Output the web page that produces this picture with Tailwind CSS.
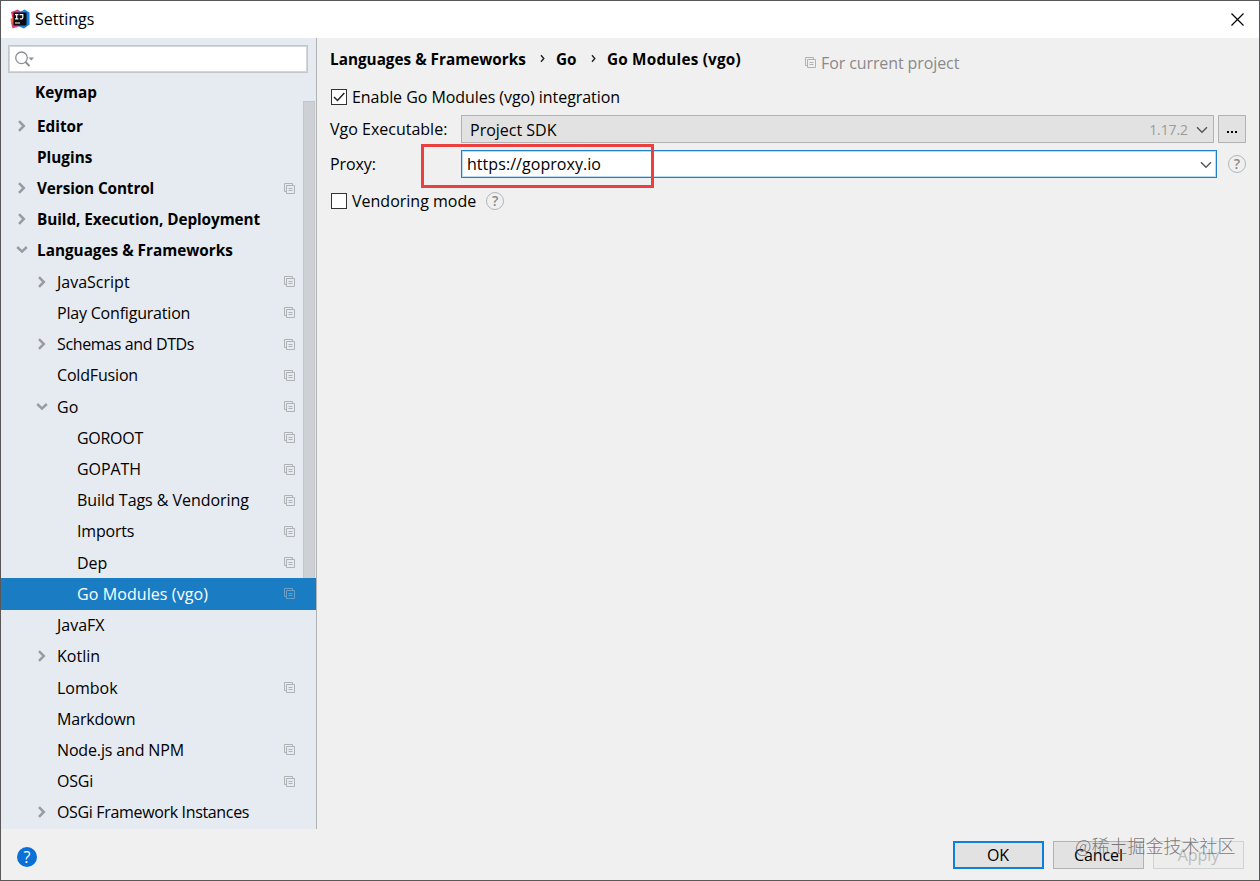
<!DOCTYPE html>
<html lang="en">
<head>
<meta charset="utf-8">
<title>Settings</title>
<script src="https://cdn.jsdelivr.net/npm/@tailwindcss/browser@4"></script>
</head>
<body class="w-[1260px] h-[881px] overflow-hidden">
<svg class="hidden">
  <symbol id="right" viewBox="0 0 10 12"><path d="M2 1.2 6.8 6 2 10.8" fill="none" stroke="#999c9f" stroke-width="2.5"/></symbol>
  <symbol id="down" viewBox="0 0 12 10"><path d="M1.2 2 6 6.6 10.8 2" fill="none" stroke="#999c9f" stroke-width="2.5"/></symbol>
  <symbol id="copy" viewBox="0 0 11 11"><path d="M2.5 8.5h-2v-8h8v2M2.5 2.5h8v8h-8zM4.5 5.5h4M4.5 7.5h4" fill="none" stroke="currentColor"/></symbol>
  <symbol id="chev" viewBox="0 0 12 8"><path d="M1 1.2 6 6.3 11 1.2" fill="none" stroke="#555" stroke-width="1.4"/></symbol>
</svg>
<div class="relative w-full h-full flex flex-col border border-[#58585a] bg-[#f0f0f0] text-black text-[16px] leading-5 whitespace-nowrap font-['Open_Sans','Noto_Sans_CJK_SC',sans-serif]">
  <header class="h-[37px] shrink-0 bg-white flex items-center pl-[9px] pr-[15px] pb-px">
    <svg class="w-5 h-5" viewBox="0 0 20 20">
      <path d="M1 3 8 .5 10 9 4 12 2 8z" fill="#e8396d"/>
      <path d="M.5 10 5 7 9 16 2 18z" fill="#f0683c"/>
      <path d="M1.5 14 6 12l4 5-7.500 2.500z" fill="#d9447d"/>
      <path d="M10 3 14.500.5 19.500 3.500v12L14 19.500 8 17z" fill="#1b7fe0"/>
      <path d="M8 1 12 3 10 5H6z" fill="#8a58b8"/>
      <path d="M3.500 3.500h13v13h-13z" fill="#0b0b10"/>
      <path d="M5 5.600h3.400M6.700 5.600v4.300M5 9.900h3.400M9.600 5.600h3.200v3q0 1.300-1.300 1.300h-1.700M5 14h5" fill="none" stroke="#fff" stroke-width="1.200"/>
    </svg>
    <span class="ml-[5px]">Settings</span>
    <svg class="ml-auto w-[13px] h-[13px]" viewBox="0 0 13 13"><path d="M.5.5l12 12M12.500.5l-12 12" stroke="#000" stroke-width="1.200"/></svg>
  </header>
  <div class="flex h-[791px] shrink-0">
    <aside class="relative w-[316px] h-full bg-[#e6eaf1] border-r border-[#b0b1b3] flex flex-col shrink-0">
      <div class="mt-[7px] ml-[7px] w-[300px] h-7 shrink-0 bg-white border border-[#c3c7cb] ring-1 ring-inset ring-[#d3d6d9] flex items-center pl-[5px]">
        <svg class="w-[22px] h-4" viewBox="0 0 22 16"><circle cx="7.500" cy="6.800" r="5.800" fill="none" stroke="#8c8f92" stroke-width="1.300"/><path d="m11.500 11 4 4" stroke="#8c8f92" stroke-width="1.800"/><path d="M14.500 6.500h5.500l-2.700 3z" fill="#8c8f92"/></svg>
      </div>
      <div class="absolute right-px top-[63px] w-[12px] h-[506px] bg-[#cdd1d5] border border-[#c3c7cb]"></div>
      <nav id="tree" class="relative flex flex-col"></nav>
    </aside>
    <main class="flex-1 pl-[13px] flex flex-col">
      <div class="flex h-10 items-center pt-px font-bold text-[15.300px]">
        <span class="w-[196px]">Languages &amp; Frameworks</span>
        <svg class="ml-[14px] w-[5px] h-[9px]" viewBox="0 0 5 9"><path d="M1 1.200 3.800 4.500 1 7.800" fill="none" stroke="#222" stroke-width="1.400"/></svg>
        <span class="ml-[11px] w-[22px]">Go</span>
        <svg class="ml-[13px] w-[5px] h-[9px]" viewBox="0 0 5 9"><path d="M1 1.200 3.800 4.500 1 7.800" fill="none" stroke="#222" stroke-width="1.400"/></svg>
        <span class="ml-[11px] w-[135px] tracking-[0.2px]">Go Modules (vgo)</span>
        <span class="ml-[63px] mt-2 flex items-center font-normal text-[16px] text-[#8a8a8a] tracking-[-0.1px]"><svg class="w-[11px] h-[11px] mr-[5px] text-[#b0b3b5]"><use href="#copy"/></svg>For current project</span>
      </div>
      <div class="mt-[9px] flex h-5 items-center">
        <span class="ml-px w-4 h-4 bg-white border border-[#333]"><svg viewBox="0 0 14 14" class="w-[14px] h-[14px]"><path d="m2 7 3.500 3.500L12.300 3" fill="none" stroke="#222" stroke-width="1.500"/></svg></span>
        <span class="ml-[5px] tracking-[-0.06px]">Enable Go Modules (vgo) integration</span>
      </div>
      <div class="mt-2 flex h-7 items-center">
        <span class="w-[131px] pb-px">Vgo Executable:</span>
        <div class="w-[753px] h-[28px] border border-[#b2b2b2] bg-[#e2e2e2] flex items-center pl-2 pr-[5px] pt-[2px]">Project SDK
          <span class="ml-auto mr-[8px] text-[14px] text-[#9b9b9b] tracking-[-0.1px]">1.17.2</span><svg class="w-3 h-2"><use href="#chev"/></svg>
        </div>
        <div class="ml-[4px] w-7 h-[28px] border border-[#b2b2b2] bg-[#e2e2e2] flex items-center justify-center gap-[2px] pt-[6px]">
          <span class="w-[2px] h-[2px] bg-black"></span><span class="w-[2px] h-[2px] bg-black"></span><span class="w-[2px] h-[2px] bg-black"></span>
        </div>
      </div>
      <div class="mt-[7px] flex h-7 items-center">
        <span class="w-[131px] pb-px tracking-[-0.1px]">Proxy:</span>
        <div class="w-[756px] h-[28px] border border-[#2380c6] ring-1 ring-inset ring-[#b9dcf3] bg-white flex items-center pl-[5px] pr-1"><span class="pb-px tracking-[0.05px]">https://goproxy.io</span><svg class="ml-auto mt-px w-3 h-2"><use href="#chev"/></svg></div>
        <span class="ml-[11px] w-[18px] h-[18px] rounded-full border-[1.500px] border-[#b3b6b8] text-[#888] text-[14px] font-semibold flex items-center justify-center leading-none">?</span>
      </div>
      <div class="mt-[13px] flex h-5 items-center">
        <span class="ml-px w-4 h-4 bg-white border border-[#333]"></span>
        <span class="ml-[5px]">Vendoring mode</span>
        <span class="ml-[10px] w-[18px] h-[18px] rounded-full border-[1.500px] border-[#b3b6b8] text-[#888] text-[14px] font-semibold flex items-center justify-center leading-none">?</span>
      </div>
    </main>
  </div>
  <footer class="flex-1 flex items-center pl-4 pr-[15px]">
    <span class="mt-[5px] w-5 h-5 rounded-full bg-[#0a6fd6] text-white text-[16px] flex items-center justify-center leading-none">?</span>
    <div class="mt-px ml-auto w-[91px] h-7 border-2 border-[#0f7fdc] bg-[#e2e2e2] flex items-center justify-center pr-px">OK</div>
    <div class="mt-px ml-[9px] w-[91px] h-7 border border-[#b2b2b2] bg-[#e2e2e2] flex items-center justify-center tracking-[-0.1px]">Cancel</div>
    <div class="mt-px ml-[9px] w-[91px] h-7 border border-[#d2d2d2] bg-[#ededed] text-[#bcbcbc] flex items-center justify-center">Apply</div>
  </footer>
  <div class="absolute left-[420px] top-[143px] w-[233px] h-[44px] border-3 border-[#ea4040]"></div>
  <div class="absolute left-[1074px] top-[832px] text-[18px] leading-6 text-[#666]/85 font-['Noto_Sans_CJK_SC'] font-light">@稀土掘金技术社区</div>
</div>
<script>
// label, left padding of the text, arrow, project icon, label classes
const rows = [
  ['Keymap', 34, '', 0, 'font-bold text-[15.300px]'],
  ['Editor', 36, 'right', 0, 'font-bold text-[15.300px]'],
  ['Plugins', 36, '', 0, 'font-bold text-[15.300px]'],
  ['Version Control', 36, 'right', 1, 'font-bold text-[15.300px] tracking-[-0.1px]'],
  ['Build, Execution, Deployment', 36, 'right', 0, 'font-bold text-[15.300px] tracking-[-0.06px]'],
  ['Languages & Frameworks', 36, 'down', 0, 'font-bold text-[15.300px]'],
  ['JavaScript', 56, 'right', 1, ''],
  ['Play Configuration', 56, '', 1, 'tracking-[-0.2px]'],
  ['Schemas and DTDs', 56, 'right', 1, 'tracking-[-0.37px]'],
  ['ColdFusion', 56, '', 1, 'tracking-[-0.17px]'],
  ['Go', 56, 'down', 1, ''],
  ['GOROOT', 76, '', 1, 'tracking-[-0.28px]'],
  ['GOPATH', 76, '', 1, 'tracking-[-0.1px]'],
  ['Build Tags & Vendoring', 76, '', 1, 'tracking-[-0.05px]'],
  ['Imports', 76, '', 1, 'tracking-[-0.2px]'],
  ['Dep', 76, '', 1, ''],
  ['Go Modules (vgo)', 76, '', 1, 'tracking-[0.09px]'],
  ['JavaFX', 56, '', 0, ''],
  ['Kotlin', 56, 'right', 0, ''],
  ['Lombok', 56, '', 1, ''],
  ['Markdown', 56, '', 0, 'tracking-[-0.2px]'],
  ['Node.js and NPM', 56, '', 1, 'tracking-[-0.15px]'],
  ['OSGi', 56, '', 1, 'tracking-[-0.2px]'],
  ['OSGi Framework Instances', 56, 'right', 0, 'tracking-[-0.34px]'],
];
document.getElementById('tree').innerHTML = rows.map(([label, x, arrow, icon, cls], i) => {
  const on = i === 16;
  const a = arrow === 'right' ? '<svg class="w-[10px] h-3 mr-[10px]"><use href="#right"/></svg>'
          : arrow === 'down' ? '<svg class="w-3 h-[10px] mr-[9px]"><use href="#down"/></svg>' : '';
  const pad = x - (arrow === 'right' ? 20 : arrow === 'down' ? 21 : 0);
  return `<div class="flex items-center pr-[21px] ${i ? 'h-[31.23px]' : 'h-[37px] pt-px'} ${on ? 'bg-[#1a7dc4] text-white' : ''}" style="padding-left:${pad}px">${a}<span class="${cls}">${label.replace('&', '&amp;')}</span>${icon ? `<svg class="ml-auto w-[11px] h-[11px] ${on ? 'text-[#6a9fc8]' : 'text-[#b0b3b5]'}"><use href="#copy"/></svg>` : ''}</div>`;
}).join('');
</script>
</body>
</html>
